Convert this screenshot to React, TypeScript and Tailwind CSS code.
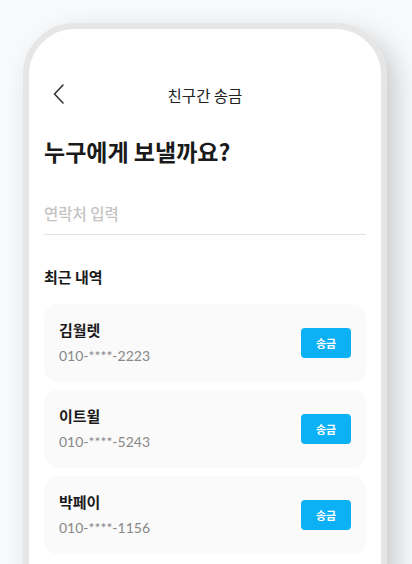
import React from "react";

const contacts = [
  { name: "김월렛", phone: "010-****-2223" },
  { name: "이트윌", phone: "010-****-5243" },
  { name: "박페이", phone: "010-****-1156" },
];

export default function App() {
  return (
    <div
      className="h-[564px] w-[412px] overflow-hidden bg-[#f8f9fa] pl-[23px] pt-[23px]"
      style={{ fontFamily: '"Noto Sans CJK KR", "Noto Sans", sans-serif' }}
    >
      <div className="h-[620px] w-[364px] rounded-[52px] border-[6px] border-[#e6e6e6] bg-white shadow-[10px_10px_26px_rgba(0,0,0,0.18)]">
        <div className="flex flex-col px-[15px] pt-[44px]">
          <div className="relative flex h-[44px] items-center justify-center">
            <svg
              className="absolute left-[9px] top-[11px]"
              width="12"
              height="20"
              viewBox="0 0 12 20"
              fill="none"
            >
              <path d="M10 1L1.5 10L10 19" stroke="#333" strokeWidth="1.6" strokeLinecap="round" strokeLinejoin="round" />
            </svg>
            <span className="text-[15.5px] leading-[20px] text-[#222]">친구간 송금</span>
          </div>
          <h1 className="mt-[19px] text-[23px] font-bold leading-[30px] text-[#1a1a1a]">누구에게 보낼까요?</h1>
          <div className="mt-[36px] border-b border-[#e3e3e3] pb-[10px]">
            <span className="block text-[15.5px] font-medium leading-[22px] text-[#c4c4c4]">연락처 입력</span>
          </div>
          <h2 className="mt-[32px] text-[15px] font-bold leading-[20px] text-[#1a1a1a]">최근 내역</h2>
          <div className="mt-[17px] flex flex-col gap-[8px]">
            {contacts.map((c) => (
              <div
                key={c.name}
                className="flex h-[78px] items-center justify-between rounded-[14px] bg-[#fafafa] px-[15px]"
              >
                <div className="flex flex-col gap-[6px]">
                  <span className="text-[15px] font-bold leading-[20px] text-[#1a1a1a]">{c.name}</span>
                  <span
                    className="text-[14px] leading-[20px] text-[#888]"
                    style={{ fontFamily: 'Lato, "Noto Sans", sans-serif' }}
                  >
                    {c.phone}
                  </span>
                </div>
                <button className="flex h-[30px] w-[50px] items-center justify-center rounded-[4px] bg-[#0cb0f5] text-[11px] font-bold text-white">
                  송금
                </button>
              </div>
            ))}
          </div>
        </div>
      </div>
    </div>
  );
}
